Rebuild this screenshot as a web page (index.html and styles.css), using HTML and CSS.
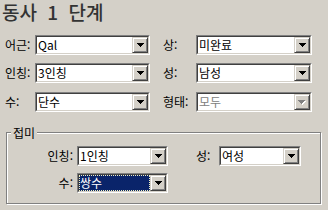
FILE: index.html
```html
<!DOCTYPE html>
<html lang="ko">
<head>
<meta charset="utf-8">
<link rel="stylesheet" href="styles.css">
</head>
<body>
<div class="page">
  <div class="title">동사 1 단계</div>
  <div class="grid">
    <span class="lbl">어근:</span>
    <div class="sel"><div class="in"><span class="val">Qal</span><span class="btn"><svg class="arr" width="7" height="4" viewBox="0 0 7 4"><path d="M0 0h7v1h-1v1h-1v1h-1v1h-1v-1h-1v-1h-1v-1h-1z"/></svg></span></div></div>
    <span class="lbl c2">상:</span>
    <div class="sel"><div class="in"><span class="val">미완료</span><span class="btn"><svg class="arr" width="7" height="4" viewBox="0 0 7 4"><path d="M0 0h7v1h-1v1h-1v1h-1v1h-1v-1h-1v-1h-1v-1h-1z"/></svg></span></div></div>

    <span class="lbl">인칭:</span>
    <div class="sel"><div class="in"><span class="val">3인칭</span><span class="btn"><svg class="arr" width="7" height="4" viewBox="0 0 7 4"><path d="M0 0h7v1h-1v1h-1v1h-1v1h-1v-1h-1v-1h-1v-1h-1z"/></svg></span></div></div>
    <span class="lbl c2">성:</span>
    <div class="sel"><div class="in"><span class="val">남성</span><span class="btn"><svg class="arr" width="7" height="4" viewBox="0 0 7 4"><path d="M0 0h7v1h-1v1h-1v1h-1v1h-1v-1h-1v-1h-1v-1h-1z"/></svg></span></div></div>

    <span class="lbl r3">수:</span>
    <div class="sel r3"><div class="in"><span class="val">단수</span><span class="btn"><svg class="arr" width="7" height="4" viewBox="0 0 7 4"><path d="M0 0h7v1h-1v1h-1v1h-1v1h-1v-1h-1v-1h-1v-1h-1z"/></svg></span></div></div>
    <span class="lbl c2 r3">형태:</span>
    <div class="sel disabled r3"><div class="in"><span class="val">모두</span><span class="btn"><svg class="arr" width="8" height="5" viewBox="0 0 8 5"><path class="hl" d="M1 1h7v1h-1v1h-1v1h-1v1h-1v-1h-1v-1h-1v-1h-1z"/><path d="M0 0h7v1h-1v1h-1v1h-1v1h-1v-1h-1v-1h-1v-1h-1z"/></svg></span></div></div>
  </div>

  <fieldset class="group">
    <legend class="legend">접미</legend>
    <div class="grid2">
      <span class="lbl r">인칭:</span>
      <div class="sel"><div class="in"><span class="val">1인칭</span><span class="btn"><svg class="arr" width="7" height="4" viewBox="0 0 7 4"><path d="M0 0h7v1h-1v1h-1v1h-1v1h-1v-1h-1v-1h-1v-1h-1z"/></svg></span></div></div>
      <span class="lbl c3">성:</span>
      <div class="sel"><div class="in"><span class="val">여성</span><span class="btn"><svg class="arr" width="7" height="4" viewBox="0 0 7 4"><path d="M0 0h7v1h-1v1h-1v1h-1v1h-1v-1h-1v-1h-1v-1h-1z"/></svg></span></div></div>

      <span class="lbl r">수:</span>
      <div class="sel focused"><div class="in"><span class="val">쌍수</span><span class="btn"><svg class="arr" width="7" height="4" viewBox="0 0 7 4"><path d="M0 0h7v1h-1v1h-1v1h-1v1h-1v-1h-1v-1h-1v-1h-1z"/></svg></span></div></div>
    </div>
  </fieldset>
</div>
</body>
</html>
```

FILE: styles.css
```css
* { box-sizing: border-box; }

body {
  margin: 0;
  width: 328px;
  height: 210px;
  overflow: hidden;
  background: #d4d0c8;
  font-family: "Noto Sans CJK KR", "Liberation Sans", sans-serif;
  font-size: 12px;
  color: #000;
}

.title {
  height: 35px;
  padding: 0 0 0 2px;
  font-size: 19px;
  font-weight: 500;
  line-height: 23px;
  word-spacing: 5px;
  color: #333;
}

.grid {
  display: grid;
  grid-template-columns: 30px 115px 46px 116px;
  grid-auto-rows: 20px;
  row-gap: 8px;
  margin-left: 5px;
}

.grid .r3 { margin-top: 1px; }

.lbl {
  line-height: 20px;
  white-space: nowrap;
}

.lbl.c2 { padding-left: 13px; }
.lbl.r { text-align: right; padding-right: 4px; }
.lbl.c3 { padding-left: 28px; }

.sel {
  height: 20px;
  border: 1px solid;
  border-color: #808080 #fff #fff #808080;
}

.sel .in {
  display: flex;
  height: 100%;
  border: 1px solid;
  border-color: #404040 #d4d0c8 #d4d0c8 #404040;
  background: #fff;
}

.val {
  flex: 1;
  min-width: 0;
  padding-left: 1px;
  line-height: 16px;
  white-space: nowrap;
  overflow: hidden;
}

.btn {
  flex: none;
  width: 16px;
  height: 16px;
  display: flex;
  align-items: center;
  justify-content: center;
  background: #d4d0c8;
  border: 1px solid;
  border-color: #d4d0c8 #404040 #404040 #d4d0c8;
  box-shadow: inset 1px 1px 0 #fff, inset -1px -1px 0 #808080;
}

.arr {
  display: block;
  fill: #000;
  shape-rendering: crispEdges;
}

.disabled .val { color: #808080; }
.disabled .arr path { fill: #808080; }
.disabled .arr path.hl { fill: #fff; }

.focused .val {
  background: #0a246a;
  color: #fff;
  outline: 1px dotted #f0f0c0;
  outline-offset: -1px;
}

.group {
  margin: 15px 0 0 6px;
  padding: 0 0 10px 0;
  width: 315px;
  border: 1px solid #808080;
  box-shadow: inset 1px 1px 0 #fff, 1px 1px 0 #fff;
  min-inline-size: 0;
}

.legend {
  margin-left: 4px;
  padding: 0 2px;
  line-height: 13px;
  background: #d4d0c8;
}

.grid2 {
  display: grid;
  grid-template-columns: 70px 91px 51px 82px;
  grid-auto-rows: 20px;
  row-gap: 7px;
  margin-top: 7px;
}
```
